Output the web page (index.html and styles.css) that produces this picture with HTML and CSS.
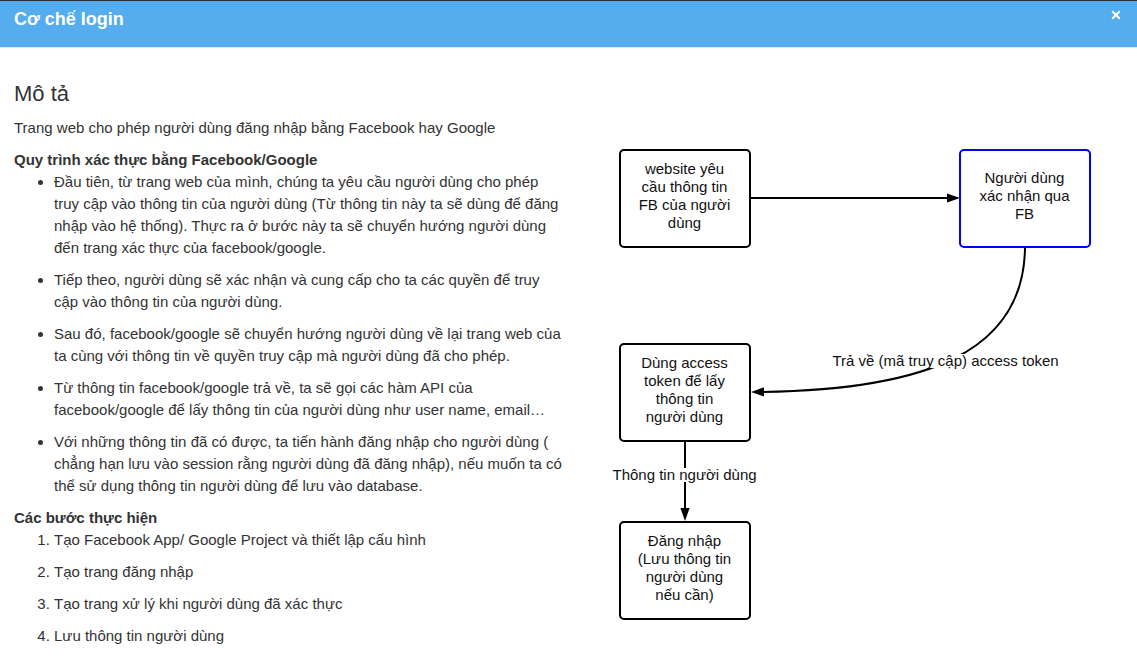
FILE: index.html
```html
<!DOCTYPE html>
<html lang="vi">
<head>
<meta charset="utf-8">
<meta name="viewport" content="width=device-width, initial-scale=1">
<title>Cơ chế login</title>
<link rel="stylesheet" href="styles.css">
</head>
<body>
<header class="dialog-header">
  <h1 class="dialog-title">Cơ chế login</h1>
  <button class="dialog-close" type="button" aria-label="Đóng">
    <svg class="dialog-close-icon" viewBox="0 0 10 10" aria-hidden="true"><path d="M1.2 1.2 8.8 8.8M8.8 1.2 1.2 8.8"/></svg>
  </button>
</header>
<main class="dialog-body">
  <section class="description">
    <h2 class="section-title">Mô tả</h2>
    <p class="text">Trang web cho phép người dùng đăng nhập bằng Facebook hay Google</p>
    <h3 class="list-title">Quy trình xác thực bằng Facebook/Google</h3>
    <ul class="list">
      <li class="list-item">Đầu tiên, từ trang web của mình, chúng ta yêu cầu người dùng cho phép<br>truy cập vào thông tin của người dùng (Từ thông tin này ta sẽ dùng để đăng<br>nhập vào hệ thống). Thực ra ở bước này ta sẽ chuyển hướng người dùng<br>đến trang xác thực của facebook/google.</li>
      <li class="list-item">Tiếp theo, người dùng sẽ xác nhận và cung cấp cho ta các quyền để truy<br>cập vào thông tin của người dùng.</li>
      <li class="list-item">Sau đó, facebook/google sẽ chuyển hướng người dùng về lại trang web của<br>ta cùng với thông tin về quyền truy cập mà người dùng đã cho phép.</li>
      <li class="list-item">Từ thông tin facebook/google trả về, ta sẽ gọi các hàm API của<br>facebook/google để lấy thông tin của người dùng như user name, email…</li>
      <li class="list-item">Với những thông tin đã có được, ta tiến hành đăng nhập cho người dùng (<br>chẳng hạn lưu vào session rằng người dùng đã đăng nhập), nếu muốn ta có<br>thể sử dụng thông tin người dùng để lưu vào database.</li>
    </ul>
    <h3 class="list-title">Các bước thực hiện</h3>
    <ol class="list">
      <li class="list-item">Tạo Facebook App/ Google Project và thiết lập cấu hình</li>
      <li class="list-item">Tạo trang đăng nhập</li>
      <li class="list-item">Tạo trang xử lý khi người dùng đã xác thực</li>
      <li class="list-item">Lưu thông tin người dùng</li>
    </ol>
  </section>
  <section class="diagram" aria-label="Sơ đồ đăng nhập">
    <svg class="diagram-lines" viewBox="0 0 500 480" aria-hidden="true">
      <path class="line" d="M142 58H346"/>
      <path class="line" d="M416 106C416 212 318 250 150 252"/>
      <path class="line" d="M76 300V374"/>
      <path class="arrow" d="M351 58l-13-4.500v9zM142 252l13-4.700v9.200zM76 381l-4.600-13h9.200z"/>
    </svg>
    <div class="node node-request">website yêu<br>cầu thông tin<br>FB của người<br>dùng</div>
    <div class="node node-confirm">Người dùng<br>xác nhận qua<br>FB</div>
    <div class="node node-token">Dùng access<br>token để lấy<br>thông tin<br>người dùng</div>
    <div class="node node-login">Đăng nhập<br>(Lưu thông tin<br>người dùng<br>nếu cần)</div>
    <span class="label label-return">Trả về (mã truy cập) access token</span>
    <span class="label label-info">Thông tin người dùng</span>
  </section>
</main>
</body>
</html>
```
FILE: styles.css
```css
* {
  box-sizing: border-box;
}

body {
  margin: 0;
  background: #fff;
  color: #333;
  font: 15px/22px "Liberation Sans", Arial, sans-serif;
}

.dialog-header {
  display: flex;
  justify-content: space-between;
  align-items: flex-start;
  padding: 7px 14px 17px;
  border-top: 1px solid #2b2b2b;
  border-bottom: 1px solid #e5e5e5;
  background: #55acee;
  color: #fff;
}

.dialog-title {
  margin: 0;
  font-size: 18px;
  line-height: 22px;
}

.dialog-close {
  display: flex;
  padding: 2px;
  border: 0;
  background: none;
  color: inherit;
  cursor: pointer;
}

.dialog-close-icon {
  width: 10px;
  height: 10px;
  fill: none;
  stroke: currentColor;
  stroke-width: 2;
}

.dialog-body {
  display: grid;
  grid-template-columns: 1fr 1fr;
  padding: 33px 14px 0;
}

.section-title {
  margin: 0 0 10px;
  font-size: 22px;
  font-weight: 400;
  line-height: 26px;
}

.text {
  margin: 0 0 10px;
}

.list-title {
  margin: 0;
  font-size: 15px;
  line-height: 22px;
}

.list {
  margin: 0;
  padding-left: 40px;
}

.list-item {
  margin-bottom: 10px;
}

.diagram {
  position: relative;
  width: 500px;
  height: 480px;
  margin: 59px 0 0 40px;
  color: #111;
}

.diagram-lines {
  display: block;
  width: 500px;
  height: 480px;
}

.line {
  fill: none;
  stroke: #000;
  stroke-width: 2;
}

.arrow {
  fill: #000;
}

.node {
  position: absolute;
  display: flex;
  align-items: center;
  justify-content: center;
  width: 132px;
  height: 99px;
  padding-bottom: 6px;
  border: 2px solid #000;
  border-radius: 5px;
  background: #fff;
  font-size: 15px;
  line-height: 18px;
  text-align: center;
}

.node-request {
  left: 10px;
  top: 9px;
}

.node-confirm {
  left: 350px;
  top: 9px;
  border-color: #00f;
}

.node-token {
  left: 10px;
  top: 203px;
}

.node-login {
  left: 10px;
  top: 381px;
}

.label {
  position: absolute;
  background: #fff;
  font-size: 15px;
  line-height: 14px;
  white-space: nowrap;
}

.label-return {
  left: 224px;
  top: 214px;
}

.label-info {
  left: 4px;
  top: 328px;
}
```
